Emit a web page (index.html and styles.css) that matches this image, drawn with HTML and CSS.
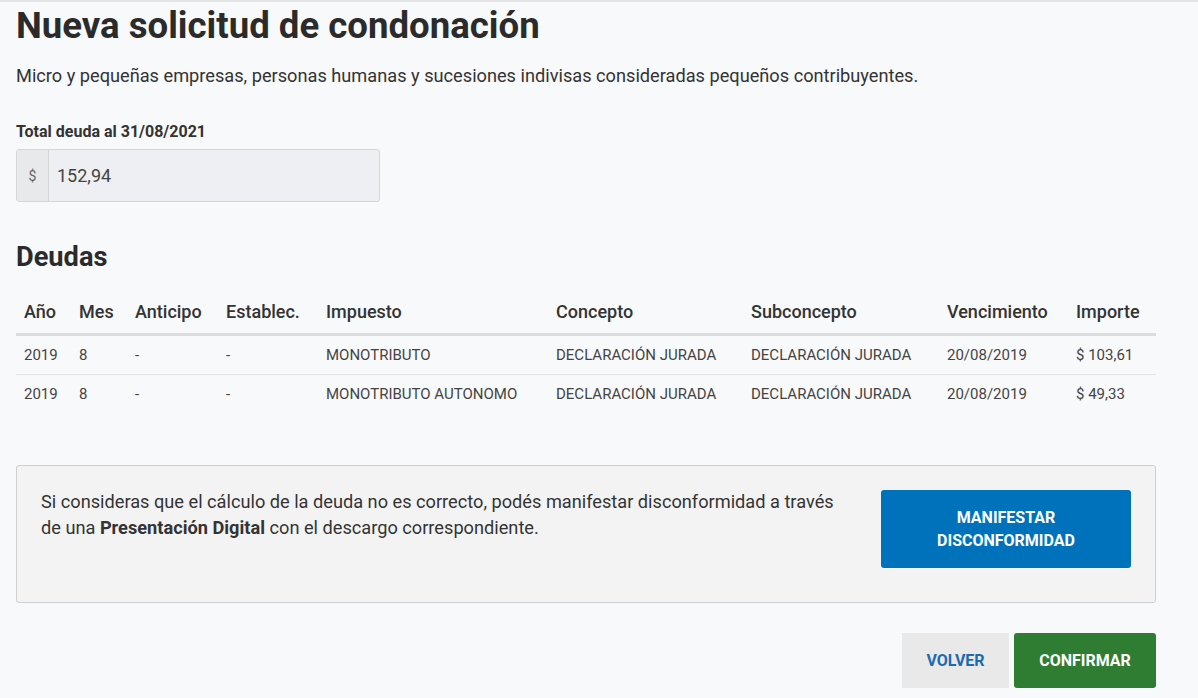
FILE: index.html
```html
<!DOCTYPE html>
<html lang="es">
<head>
    <meta charset="UTF-8">
    <meta name="viewport" content="width=device-width, initial-scale=1.0">
    <title>Nueva solicitud de condonación</title>
    <link rel="stylesheet" href="styles.css">
</head>
<body>
    <main class="contenedor">
        <h1>Nueva solicitud de condonación</h1>
        <p class="bajada">Micro y pequeñas empresas, personas humanas y sucesiones indivisas consideradas pequeños contribuyentes.</p>

        <!-- Total de la deuda -->
        <div class="campo">
            <label for="total">Total deuda al 31/08/2021</label>
            <div class="grupo-input">
                <span class="prefijo">$</span>
                <input id="total" type="text" value="152,94" readonly>
            </div>
        </div>

        <h2>Deudas</h2>
        <table class="tabla">
            <thead>
                <tr>
                    <th class="c-anio">Año</th>
                    <th class="c-mes">Mes</th>
                    <th class="c-anticipo">Anticipo</th>
                    <th class="c-establec">Establec.</th>
                    <th class="c-impuesto">Impuesto</th>
                    <th class="c-concepto">Concepto</th>
                    <th class="c-sub">Subconcepto</th>
                    <th class="c-venc">Vencimiento</th>
                    <th>Importe</th>
                </tr>
            </thead>
            <tbody>
                <tr>
                    <td>2019</td>
                    <td>8</td>
                    <td>-</td>
                    <td>-</td>
                    <td>MONOTRIBUTO</td>
                    <td>DECLARACIÓN JURADA</td>
                    <td>DECLARACIÓN JURADA</td>
                    <td>20/08/2019</td>
                    <td>$ 103,61</td>
                </tr>
                <tr>
                    <td>2019</td>
                    <td>8</td>
                    <td>-</td>
                    <td>-</td>
                    <td>MONOTRIBUTO AUTONOMO</td>
                    <td>DECLARACIÓN JURADA</td>
                    <td>DECLARACIÓN JURADA</td>
                    <td>20/08/2019</td>
                    <td>$ 49,33</td>
                </tr>
            </tbody>
        </table>

        <!-- Aviso de disconformidad -->
        <div class="aviso">
            <p>Si consideras que el cálculo de la deuda no es correcto, podés manifestar disconformidad a través<br>de una <strong>Presentación Digital</strong> con el descargo correspondiente.</p>
            <button class="btn btn-azul">Manifestar<br>disconformidad</button>
        </div>

        <div class="acciones">
            <button class="btn btn-gris">Volver</button>
            <button class="btn btn-verde">Confirmar</button>
        </div>
    </main>
</body>
</html>
```

FILE: styles.css
```css
body {
    font-family: 'Roboto', 'Liberation Sans', sans-serif;
    margin: 0;
    padding: 0;
    background-color: #f8f9fa;
    color: #333;
    border-top: 2px solid #e2e4e6;
}
.contenedor {
    width: 1140px;
    margin-left: 16px;
}
h1 {
    font-size: 36.6px;
    font-weight: 700;
    color: #2b2b2b;
    margin: 2px 0 0;
    line-height: 44px;
}
.bajada {
    font-size: 18.2px;
    color: #333;
    margin: 15px 0 0;
    line-height: 26px;
}
.campo {
    margin-top: 33px;
}
.campo label {
    display: block;
    font-size: 16px;
    font-weight: 700;
    color: #333;
    line-height: 20px;
}
.grupo-input {
    display: flex;
    width: 364px;
    height: 53px;
    margin-top: 7px;
    border: 1px solid #d4d6d8;
    border-radius: 3px;
    background-color: #eeeff2;
    box-sizing: border-box;
}
.prefijo {
    width: 31px;
    display: flex;
    align-items: center;
    justify-content: center;
    font-size: 14px;
    color: #666;
    background-color: #e8e9eb;
    border-right: 1px solid #d4d6d8;
}
.grupo-input input {
    flex: 1;
    border: none;
    background: transparent;
    font-family: inherit;
    font-size: 18px;
    color: #444;
    padding: 0 8px;
    outline: none;
}
h2 {
    font-size: 27.2px;
    font-weight: 700;
    color: #2b2b2b;
    margin: 38px 0 0;
    line-height: 34px;
}
.tabla {
    width: 100%;
    border-collapse: collapse;
    margin-top: 19px;
}
.tabla th {
    text-align: left;
    font-size: 18px;
    font-weight: 500;
    color: #333;
    padding: 8px 8px 10px;
    border-bottom: 3px solid #dcdcdc;
    line-height: 22px;
}
.tabla td {
    font-size: 15px;
    color: #444;
    padding: 9px 8px;
    line-height: 20px;
    border-bottom: 1px solid #e4e4e4;
}
.tabla tbody tr:last-child td {
    border-bottom: none;
}
.c-anio { width: 39px; }
.c-mes { width: 40px; }
.c-anticipo { width: 75px; }
.c-establec { width: 84px; }
.c-impuesto { width: 214px; }
.c-concepto { width: 179px; }
.c-sub { width: 180px; }
.c-venc { width: 113px; }
.aviso {
    margin-top: 52px;
    display: flex;
    justify-content: space-between;
    align-items: flex-start;
    padding: 23px 24px 0;
    background-color: #f3f3f3;
    border: 1px solid #cfcfcf;
    border-radius: 3px;
    height: 138px;
    box-sizing: border-box;
}
.aviso p {
    margin: 0;
    width: 810px;
    font-size: 18.2px;
    line-height: 26px;
    color: #333;
}
.btn {
    border: none;
    border-radius: 3px;
    font-family: inherit;
    font-size: 16px;
    font-weight: 700;
    text-transform: uppercase;
    cursor: pointer;
}
.btn-azul {
    width: 250px;
    height: 78px;
    margin-top: 1px;
    background-color: #0072bb;
    color: white;
    line-height: 23px;
}
.acciones {
    display: flex;
    justify-content: flex-end;
    gap: 5px;
    margin-top: 30px;
}
.btn-gris {
    width: 107px;
    height: 55px;
    background-color: #e9e9e9;
    color: #1c6bb0;
    border-radius: 0;
}
.btn-verde {
    width: 142px;
    height: 55px;
    background-color: #2e7d32;
    color: white;
}
```
